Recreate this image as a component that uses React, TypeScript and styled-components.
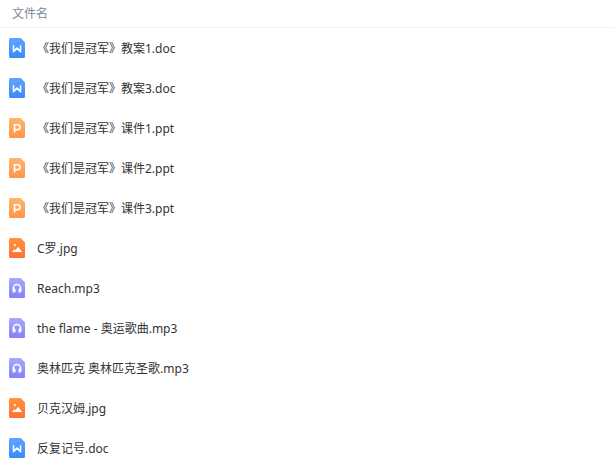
import React from "react";
import styled, { createGlobalStyle } from "styled-components";

type FileKind = "doc" | "ppt" | "image" | "audio";

interface FileEntry {
  name: string;
  kind: FileKind;
}

const files: FileEntry[] = [
  { name: "《我们是冠军》教案1.doc", kind: "doc" },
  { name: "《我们是冠军》教案3.doc", kind: "doc" },
  { name: "《我们是冠军》课件1.ppt", kind: "ppt" },
  { name: "《我们是冠军》课件2.ppt", kind: "ppt" },
  { name: "《我们是冠军》课件3.ppt", kind: "ppt" },
  { name: "C罗.jpg", kind: "image" },
  { name: "Reach.mp3", kind: "audio" },
  { name: "the flame - 奥运歌曲.mp3", kind: "audio" },
  { name: "奥林匹克 奥林匹克圣歌.mp3", kind: "audio" },
  { name: "贝克汉姆.jpg", kind: "image" },
  { name: "反复记号.doc", kind: "doc" },
];

const palette: Record<FileKind, { top: string; bottom: string; fold: string }> = {
  doc: { top: "#5ea5ff", bottom: "#398bfb", fold: "#3b86ee" },
  ppt: { top: "#ffb46c", bottom: "#ff974a", fold: "#f59a4e" },
  image: { top: "#ff943c", bottom: "#ff7038", fold: "#f27a30" },
  audio: { top: "#aaa9ff", bottom: "#8182fc", fold: "#8c8cf2" },
};

const GlobalStyle = createGlobalStyle`
  body {
    margin: 0;
    background: #fff;
    color: #333;
    font-family: "Noto Sans", "Noto Sans CJK SC", sans-serif;
    font-size: 12px;
  }
`;

const FileTable = styled.table`
  width: 100%;
  border-collapse: separate;
  border-spacing: 0;
`;

const HeaderCell = styled.th`
  box-sizing: border-box;
  height: 28px;
  padding: 0 12px;
  border-bottom: 1px solid #f2f2f3;
  color: #818999;
  font-weight: 400;
  line-height: 16px;
  text-align: left;
`;

const FileCell = styled.td`
  height: 40px;
  padding: 0 9px;
`;

const FileLabel = styled.div`
  display: flex;
  align-items: center;
  gap: 12px;
  white-space: nowrap;
`;

const FileName = styled.span`
  padding-top: 2px;
  line-height: 18px;
`;

const IconSvg = styled.svg`
  flex: none;
  width: 16px;
  height: 20px;
`;

const glyphs: Record<FileKind, React.ReactNode> = {
  doc: (
    <path
      d="M4.5 7.2V13.6L8 10 11.5 13.6V7.2"
      fill="none"
      stroke="#fff"
      strokeWidth="1.6"
      strokeLinejoin="round"
    />
  ),
  ppt: (
    <path
      d="M5.5 14.5V6.8H8.7A2.4 2.4 0 0 1 8.7 11.6H5.5"
      fill="none"
      stroke="#fff"
      strokeWidth="1.6"
    />
  ),
  image: (
    <>
      <circle cx="5.8" cy="7.2" r="1.1" fill="#fff" />
      <path d="M2.9 14 5.3 11.2 6.7 12 9.2 8.8 13.2 14Z" fill="#fff" />
    </>
  ),
  audio: (
    <>
      <path d="M4.4 12V10A3.6 3.6 0 0 1 11.6 10V12" fill="none" stroke="#fff" strokeWidth="1.5" />
      <rect x="3.6" y="10.4" width="2.9" height="4" rx="1" fill="#fff" />
      <rect x="9.5" y="10.4" width="2.9" height="4" rx="1" fill="#fff" />
    </>
  ),
};

function FileIcon({ kind }: { kind: FileKind }) {
  const id = React.useId();
  const { top, bottom, fold } = palette[kind];
  return (
    <IconSvg viewBox="0 0 16 20" aria-hidden="true">
      <defs>
        <linearGradient id={id} x1="0" y1="0" x2="0" y2="1">
          <stop offset="0" stopColor={top} />
          <stop offset="1" stopColor={bottom} />
        </linearGradient>
      </defs>
      <path
        d="M1.5 0H11.6L16 4.4V18.5A1.5 1.5 0 0 1 14.5 20H1.5A1.5 1.5 0 0 1 0 18.5V1.5A1.5 1.5 0 0 1 1.5 0Z"
        fill={`url(#${id})`}
      />
      <path d="M11.6 0 16 4.4H13A1.4 1.4 0 0 1 11.6 3Z" fill={fold} fillOpacity="0.15" />
      {glyphs[kind]}
    </IconSvg>
  );
}

export default function App() {
  return (
    <>
      <GlobalStyle />
      <FileTable lang="zh-CN">
        <thead>
          <tr>
            <HeaderCell scope="col">文件名</HeaderCell>
          </tr>
        </thead>
        <tbody>
          {files.map((file) => (
            <tr key={file.name}>
              <FileCell>
                <FileLabel>
                  <FileIcon kind={file.kind} />
                  <FileName>{file.name}</FileName>
                </FileLabel>
              </FileCell>
            </tr>
          ))}
        </tbody>
      </FileTable>
    </>
  );
}
